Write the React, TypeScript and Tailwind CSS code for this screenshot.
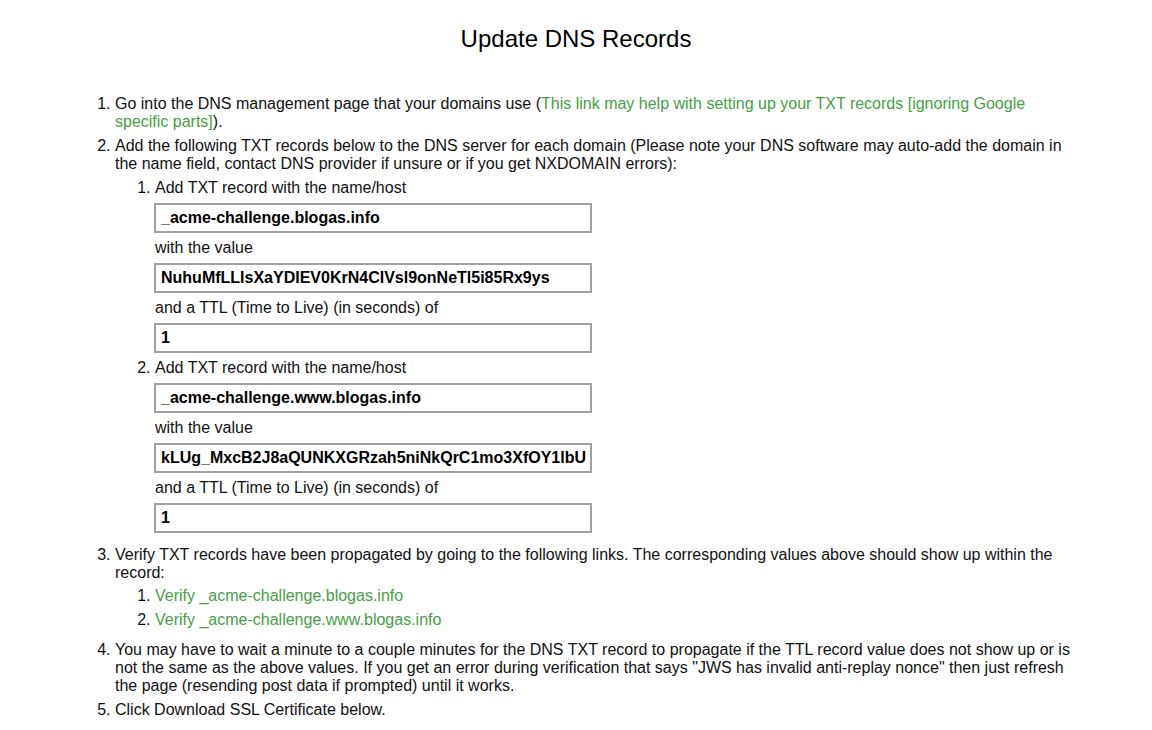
import React from 'react';

const link = 'text-[#46a046]';

const Field: React.FC<{ value: string }> = ({ value }) => (
    <div className="my-[6px] -ml-px h-[30px] w-[438px] border-2 border-[#a0a0a0] bg-white px-[5px] text-[16px] font-bold leading-[26px] text-black overflow-hidden whitespace-nowrap">
        {value}
    </div>
);

const Record: React.FC<{ host: string; value: string }> = ({ host, value }) => (
    <li className="mb-[6px]">
        <div>Add TXT record with the name/host</div>
        <Field value={host} />
        <div>with the value</div>
        <Field value={value} />
        <div>and a TTL (Time to Live) (in seconds) of</div>
        <Field value="1" />
    </li>
);

export default function App() {
    return (
        <div className="min-h-screen bg-white text-[#111] font-['Liberation_Sans',Arial,sans-serif] text-[16px] leading-[18px]">
            <div className="mx-auto w-[1000px] pt-[25px]">
                <h1 className="text-center text-[24px] leading-[28px] text-black">Update DNS Records</h1>

                <ol className="mt-[42px] list-decimal pl-[39px]">
                    <li className="mb-[6px]">
                        Go into the DNS management page that your domains use (<span className={link}>This link may help with setting up your TXT records [ignoring Google specific parts]</span>).
                    </li>
                    <li className="mb-[13px]">
                        Add the following TXT records below to the DNS server for each domain (Please note your DNS software may auto-add the domain in the name field, contact DNS provider if unsure or if you get NXDOMAIN errors):
                        <ol className="mt-[6px] list-decimal pl-[40px]">
                            <Record host="_acme-challenge.blogas.info" value="NuhuMfLLIsXaYDIEV0KrN4CIVsl9onNeTl5i85Rx9ys" />
                            <Record host="_acme-challenge.www.blogas.info" value="kLUg_MxcB2J8aQUNKXGRzah5niNkQrC1mo3XfOY1lbU" />
                        </ol>
                    </li>
                    <li className="mb-[6px]">
                        Verify TXT records have been propagated by going to the following links. The corresponding values above should show up within the record:
                        <ol className="mt-[5px] mb-[12px] list-decimal pl-[40px]">
                            <li className="mb-[6px]"><span className={link}>Verify _acme-challenge.blogas.info</span></li>
                            <li className="mb-[6px]"><span className={link}>Verify _acme-challenge.www.blogas.info</span></li>
                        </ol>
                    </li>
                    <li className="mb-[6px]">
                        You may have to wait a minute to a couple minutes for the DNS TXT record to propagate if the TTL record value does not show up or is not the same as the above values. If you get an error during verification that says "JWS has invalid anti-replay nonce" then just refresh the page (resending post data if prompted) until it works.
                    </li>
                    <li className="mb-[6px]">Click Download SSL Certificate below.</li>
                </ol>
            </div>
        </div>
    );
}
